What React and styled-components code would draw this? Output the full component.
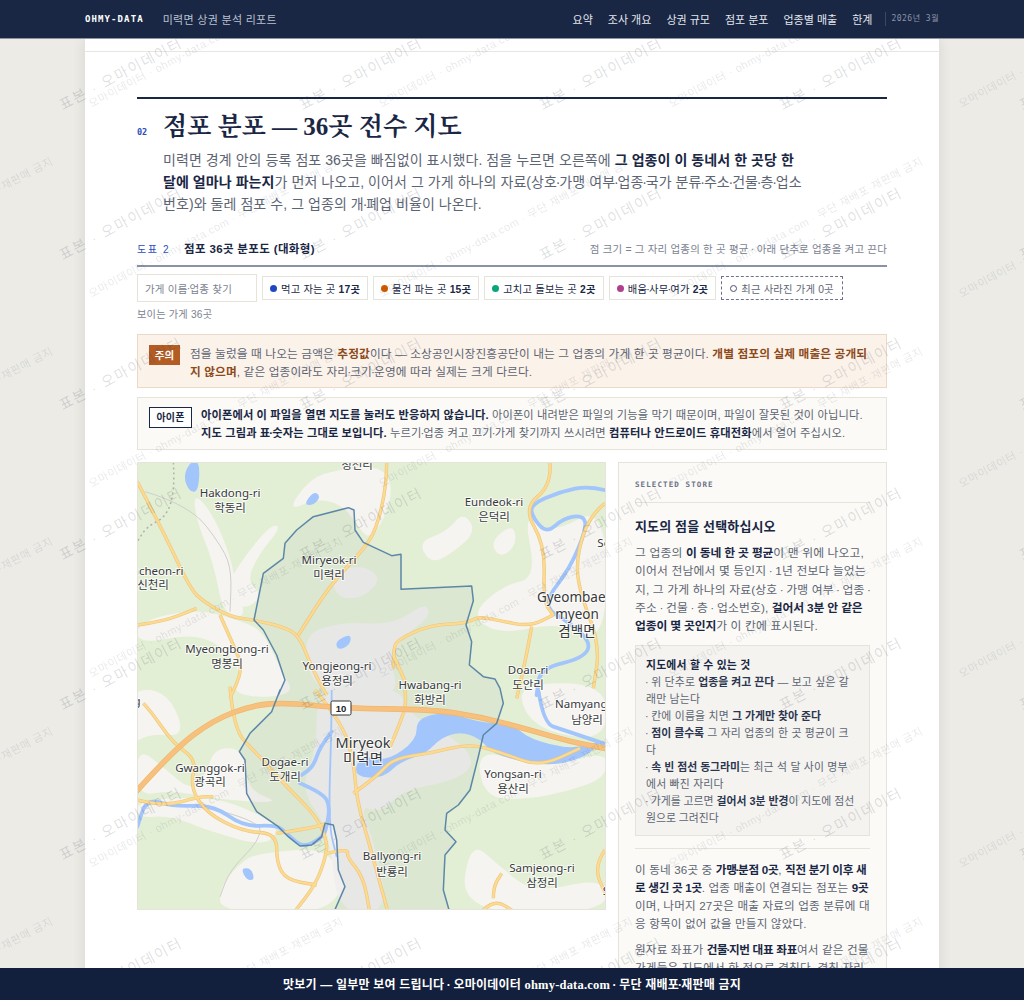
import React from 'react';
import styled, {createGlobalStyle} from 'styled-components';

const SANS = `'Liberation Sans', 'Noto Sans CJK KR', sans-serif`;
const MONO = `'DejaVu Sans Mono', 'Liberation Mono', 'Noto Sans CJK KR', monospace`;
const SERIF = `'Liberation Serif', 'Noto Serif CJK KR', 'Noto Sans CJK KR', serif`;
const NAVY = '#1a2744';
const LINE = '#e6e3da';
const GREY = '#5d6573';

const Reset = createGlobalStyle`
	* { box-sizing: border-box; }
	html, body { margin: 0; padding: 0; height: 100%; overflow: hidden; }
	body { font-family: ${SANS}; color: ${NAVY}; background: #ecebe6; }
`;

const Shell = styled.div`
	display: flex;
	flex-direction: column;
	height: 100vh;
	position: relative;
	overflow: hidden;
`;

const Nav = styled.header`
	flex: none;
	height: 39px;
	background: ${NAVY};
	border-bottom: 1px solid #8c93a3;
	display: flex;
	align-items: center;
	padding: 0 85px;
	position: relative;
	z-index: 3;
`;
const Logo = styled.span`
	font: bold 9px ${MONO};
	letter-spacing: 1.1px;
	color: #fff;
`;
const NavTitle = styled.span`
	margin-left: 19px;
	font-size: 11px;
	letter-spacing: 0.3px;
	color: #b9c0cf;
`;
const NavLinks = styled.nav`
	margin-left: auto;
	display: flex;
	gap: 15px;
	font-size: 11px;
	color: #e3e6ec;
`;
const NavDate = styled.span`
	margin-left: 13px;
	padding-left: 5px;
	border-left: 1px solid #3b4763;
	font: 8px/14px ${MONO};
	letter-spacing: 0.5px;
	color: #8b94a8;
`;

const Scroller = styled.main`
	flex: 1;
	min-height: 0;
	overflow: hidden;
`;
const Page = styled.div`
	width: 854px;
	margin: 0 auto;
	background: #fff;
	box-shadow: 0 0 12px rgba(60, 60, 50, 0.12);
`;
const PageStrip = styled.div`
	height: 13px;
	border-bottom: 1px solid #e8e6e0;
`;
const Body = styled.div`
	padding: 45px 52px 0;
`;
const SectionHead = styled.div`
	border-top: 2px solid ${NAVY};
	padding-top: 12px;
	display: flex;
	align-items: baseline;
	gap: 15px;
`;
const SectionNo = styled.span`
	width: 11px;
	font: bold 8.5px ${MONO};
	color: #2c4fc0;
`;
const SectionTitle = styled.h2`
	margin: 0;
	font: bold 25px/32px ${SERIF};
	color: ${NAVY};
`;
const Intro = styled.p`
	margin: 6px 0 0 26px;
	width: 645px;
	font-size: 14px;
	line-height: 22px;
	letter-spacing: 0.07px;
	color: ${GREY};
	b { color: ${NAVY}; font-weight: 700; }
`;
// the reference sets its middle dots much tighter than the font does
const Mid = styled.span`
	margin: 0 -0.085em;
`;
const D = () => <Mid>·</Mid>;

const FigureHead = styled.div`
	margin-top: 22px;
	display: flex;
	align-items: center;
	height: 22px;
	padding-bottom: 6px;
	border-bottom: 2px solid #8a92a5;
	box-sizing: content-box;
`;
const FigureNo = styled.span`
	width: 47px;
	font-size: 10px;
	letter-spacing: 1.6px;
	color: #2c4fc0;
`;
const FigureName = styled.span`
	font-size: 11.5px;
	font-weight: 700;
	letter-spacing: 0.35px;
`;
const FigureNote = styled.span`
	margin-left: auto;
	font-size: 10.5px;
	letter-spacing: 0.17px;
	color: #7b8290;
`;

const Controls = styled.div`
	margin-top: 7px;
	display: flex;
	align-items: center;
	gap: 5px;
`;
const Search = styled.div`
	width: 120px;
	height: 28px;
	padding: 0 7px;
	display: flex;
	align-items: center;
	border: 1px solid ${LINE};
	font-size: 10.5px;
	letter-spacing: 0.2px;
	color: #7b8290;
`;
const Chip = styled.div`
	height: 24px;
	padding: 0 ${({$dashed}) => ($dashed ? 8 : 7)}px;
	display: flex;
	align-items: center;
	gap: 4px;
	background: #fff;
	border: 1px ${({$dashed}) => ($dashed ? 'dashed #6b7488' : `solid ${LINE}`)};
	font-size: 10.3px;
	letter-spacing: 0.2px;
	color: ${({$dashed}) => ($dashed ? '#5d6573' : NAVY)};
	b { font-weight: 700; }
`;
const Dot = styled.i`
	width: 7px;
	height: 7px;
	border-radius: 50%;
	background: ${({$color}) => $color};
`;
const Ring = styled.i`
	width: 7px;
	height: 7px;
	border-radius: 50%;
	border: 1.5px solid #4a5468;
`;
const Visible = styled.div`
	margin-top: 5px;
	font-size: 10.2px;
	line-height: 15px;
	letter-spacing: 0.2px;
	color: #7b8290;
`;

const Notice = styled.div`
	margin-top: ${({$mt}) => $mt}px;
	padding: ${({$pt}) => $pt}px 16px 7px 11px;
	display: flex;
	align-items: flex-start;
	gap: ${({$gap}) => $gap}px;
	background: ${({$warm}) => ($warm ? '#fbf2ea' : '#fbfaf6')};
	border: 1px solid ${({$warm}) => ($warm ? '#ecd9c5' : LINE)};
	font-size: ${({$size}) => $size}px;
	line-height: 17.6px;
	letter-spacing: 0.12px;
	color: ${GREY};
	b { font-weight: 700; color: ${({$warm}) => ($warm ? '#8d4a1a' : NAVY)}; }
`;
const WarnTag = styled.span`
	flex: none;
	width: 31px;
	height: 20px;
	background: #b35c24;
	color: #fff;
	font-size: 10.5px;
	font-weight: 700;
	line-height: 20px;
	text-align: center;
`;
const PhoneTag = styled.span`
	flex: none;
	width: 43px;
	height: 21px;
	background: #fff;
	border: 1px solid ${NAVY};
	color: ${NAVY};
	font-size: 10px;
	font-weight: 700;
	line-height: 19px;
	text-align: center;
`;

const Split = styled.div`
	margin-top: 12px;
	display: grid;
	grid-template-columns: 469px 269px;
	gap: 12px;
	align-items: start;
`;
const MapFrame = styled.div`
	height: 448px;
	border: 1px solid ${LINE};
	overflow: hidden;
	svg { display: block; width: 100%; height: 100%; }
`;
const Side = styled.aside`
	padding: 16px 16px 20px;
	background: #fbfaf7;
	border: 1px solid ${LINE};
`;
const SideKicker = styled.div`
	padding-bottom: 12px;
	border-bottom: 1px solid ${LINE};
	font: bold 7.5px/11px ${MONO};
	letter-spacing: 1.1px;
	color: #6b7488;
`;
const SideTitle = styled.h3`
	margin: 15px 0 0;
	font-size: 13px;
	line-height: 18px;
	font-weight: 700;
	letter-spacing: 0.15px;
`;
const SideText = styled.p`
	margin: ${({$mt}) => $mt}px -1.5px 0 0;
	font-size: ${({$size}) => $size || 11.8}px;
	line-height: 18.1px;
	letter-spacing: 0.15px;
	color: ${GREY};
	b { font-weight: 700; letter-spacing: ${({$size}) => ($size ? -0.3 : -0.15)}px; color: ${NAVY}; }
`;
const Tips = styled.div`
	margin-top: 10px;
	padding: 11px 13px 8px 10px;
	background: #f4f3ef;
	border: 1px solid ${LINE};
	font-size: 10.85px;
	line-height: 17px;
	letter-spacing: 0.2px;
	color: ${GREY};
	b { font-weight: 700; letter-spacing: 0; color: #2c3650; }
`;
const TipsHead = styled.div`
	font-weight: 700;
	color: ${NAVY};
`;
const TipLine = styled.div`
	letter-spacing: ${({$tight}) => ($tight ? -0.02 : 0.2)}px;
`;
const SideRule = styled.div`
	margin-top: 12px;
	border-top: 1px solid ${LINE};
`;

const Footer = styled.footer`
	flex: none;
	height: 32px;
	background: #13203d;
	display: flex;
	align-items: center;
	justify-content: center;
	font-size: 12px;
	font-weight: 700;
	letter-spacing: 0.2px;
	color: #fff;
	position: relative;
	z-index: 3;
`;
const FooterLink = styled.span`
	font-family: ${SERIF};
	font-size: 12.5px;
`;

/* watermark repeats over everything but the two bars */
const MarkLayer = styled.div`
	position: absolute;
	left: ${({$x}) => $x}px;
	top: ${({$y}) => $y}px;
	display: grid;
	grid-template-columns: repeat(6, ${({$w}) => $w}px);
	grid-auto-rows: ${({$h}) => $h}px;
	pointer-events: none;
	z-index: 2;
`;
const Mark = styled.span`
	display: block;
	width: 0;
	height: 0;
	white-space: nowrap;
	transform-origin: 0 0;
	transform: rotate(-28deg);
	font-size: ${({$size}) => $size}px;
	line-height: 1;
	letter-spacing: ${({$space}) => $space}px;
	color: rgba(40, 50, 70, ${({$alpha}) => $alpha});
`;
const MarkRepeat = ({x, y, w, h, rows, size, space, alpha, text}) => (
	<MarkLayer $x={x} $y={y} $w={w} $h={h}>
		{Array.from({length: rows * 6}, (_, i) => (
			<Mark key={i} $size={size} $space={space} $alpha={alpha}>
				{text}
			</Mark>
		))}
	</MarkLayer>
);

/* ---- map drawing, coordinates taken from the page so 137,462 is the corner ---- */
const z5 = (pts) => pts.map(([x, y]) => [130 + x / 3, 455 + y / 3]);
const z6 = (pts) => pts.map(([x, y]) => [130 + x / 3, 690 + y / 3]);

const smooth = (pts, close) => {
	if (close) {
		const m = (a, b) => [(a[0] + b[0]) / 2, (a[1] + b[1]) / 2];
		let d = `M${m(pts[pts.length - 1], pts[0]).join(' ')}`;
		pts.forEach((p, i) => {
			d += `Q${p.join(' ')} ${m(p, pts[(i + 1) % pts.length]).join(' ')}`;
		});
		return d + 'Z';
	}
	let d = `M${pts[0].join(' ')}`;
	for (let i = 1; i < pts.length - 1; i++) {
		const mx = (pts[i][0] + pts[i + 1][0]) / 2;
		const my = (pts[i][1] + pts[i + 1][1]) / 2;
		d += `Q${pts[i].join(' ')} ${mx} ${my}`;
	}
	const last = pts[pts.length - 1];
	return d + `L${last.join(' ')}`;
};
const straight = (pts) => 'M' + pts.map((p) => p.join(' ')).join('L') + 'Z';

const LIGHT = [
	z5([[470,170],[540,70],[620,45],[745,30],[790,90],[765,190],[720,250],[690,225],[640,150],[560,130]]),
	z5([[325,330],[420,210],[455,215],[385,300],[350,380],[400,420],[340,470],[290,400]]),
	z5([[190,110],[250,180],[300,300],[320,400],[350,490],[280,480],[250,320],[200,200]]),
	z5([[865,260],[950,230],[1000,170],[1040,230],[960,300],[900,325]]),
	z5([[1080,260],[1150,205],[1160,270],[1110,310]]),
	z5([[1120,390],[1220,370],[1180,170],[1260,240],[1430,145],[1430,570],[1290,500],[1110,540],[1020,480]]),
	z5([[22,500],[200,460],[340,500],[400,530],[450,640],[500,725],[300,725],[340,640],[220,530],[22,570]]),
	z6([[20,170],[110,240],[180,300],[225,260],[255,170],[345,180],[350,300],[460,340],[280,330],[120,300],[22,320]]),
	z6([[22,330],[250,320],[370,365],[450,410],[410,470],[240,425],[120,375],[22,385]]),
	z6([[380,490],[620,470],[640,670],[270,670],[270,590],[330,520]]),
	z6([[1020,450],[1110,530],[1210,610],[1430,560],[1430,670],[990,670]]),
	z6([[1170,-20],[1430,-20],[1430,150],[1260,130],[1180,70]]),
	z6([[1040,170],[1240,240],[1430,180],[1430,260],[1330,300],[1180,330],[1060,320]]),
	z6([[-10,0],[110,0],[170,140],[60,130],[-10,170]]),
];
const GREYED = [
	z5([[600,350],[700,330],[755,370],[700,430],[620,430]]),
	z5([[510,540],[640,500],[790,510],[890,440],[900,490],[820,540],[780,620],[810,730],[560,730]]),
	z6([[560,-10],[810,-10],[830,70],[1000,160],[1035,230],[960,275],[820,300],[750,370],[690,345],[730,450],[780,670],[620,670],[600,420],[510,300],[560,180]]),
];
const ROADS = [
	z5([[22,80],[100,230],[180,400],[220,440],[300,485],[370,495],[460,515],[510,545],[545,640],[590,720]]),
	z6([[555,0],[630,90],[670,200],[680,330],[720,470],[775,670]]),
	z5([[770,22],[770,90],[740,220],[700,285],[600,390],[505,540]]),
	z5([[790,640],[790,590],[800,555],[900,510],[1010,505],[1045,485],[1100,495],[1200,515],[1270,480]]),
	z5([[1205,515],[1190,600],[1160,730]]),
	z5([[790,600],[830,690]]),
	z6([[825,0],[830,40],[810,100],[780,170]]),
	z5([[1260,22],[1265,90],[1180,160],[1245,270],[1240,440],[1270,480]]),
	z5([[1425,145],[1380,180],[1340,300],[1345,400],[1410,570],[1390,700]]),
	z5([[22,510],[100,500],[200,460]]),
	z5([[270,480],[310,570],[340,640],[300,730]]),
	z6([[300,-10],[310,120],[380,190],[470,290],[560,380],[590,450],[590,490],[560,580],[490,670]]),
	z6([[40,40],[60,60],[130,160],[200,210],[180,290],[230,370],[340,425],[440,430],[440,520],[470,570],[560,585]]),
	z6([[22,330],[100,350],[210,320],[250,320]]),
	z6([[670,310],[740,260],[790,205],[900,190],[1020,160],[1120,190],[1230,230],[1350,175]]),
	z6([[590,490],[655,475],[650,500],[700,560],[720,670]]),
	z6([[1050,670],[1090,625],[1160,670]]),
	z6([[1090,625],[1090,590],[1115,550]]),
	z6([[1425,480],[1390,530],[1430,620]]),
	z6([[440,430],[540,415],[590,400]]),
];
const HIGHWAY = z6([[5,320],[130,180],[250,90],[370,45],[470,38],[640,55],[900,58],[1050,80],[1200,120],[1320,155],[1440,178]]);
const RIVERS = [
	z6([[605,125],[570,170],[550,230],[515,255]]),
	z6([[510,280],[580,310],[600,350],[590,410],[580,440],[520,475],[470,430],[440,405],[340,410],[250,345],[130,350],[50,325],[22,410]]),
	z5([[1435,108],[1380,92],[1290,110],[1200,150],[1210,190],[1250,235],[1300,190],[1360,180],[1370,220],[1320,340],[1250,430],[1260,470],[1300,490],[1385,560],[1360,610],[1230,640],[1220,720]]),
	z6([[1225,0],[1240,100],[1300,120],[1420,160]]),
];
const LAKE = z6([[770,215],[860,150],[860,85],[950,65],[1040,95],[1150,105],[1190,140],[1260,165],[1340,175],[1425,150],[1360,205],[1250,230],[1090,195],[1050,145],[990,125],[930,145],[890,190],[810,215],[760,265],[670,260],[690,195]]);
const PONDS = [
	z5([[180,20],[210,20],[205,110],[178,110],[160,65]]),
	z5([[520,150],[552,108],[572,125],[552,150]]),
	z5([[615,560],[662,535],[662,568],[625,587]]),
	z6([[332,535],[364,535],[374,570],[350,570]]),
];
const BORDER = [
	...z5([[655,158],[672,165],[675,225],[700,262],[785,302],[813,298],[813,403],[1025,393],[1030,437],[1008,510],[1025,560],[1018,630],[1060,665],[1095,672],[1110,700]]),
	...z6([[1120,40],[1100,100],[1060,135],[1045,200],[1020,300],[985,345],[950,370],[945,420],[978,455],[945,495],[940,600],[960,670],[610,670],[645,590],[625,540],[620,450],[610,405],[585,400],[575,440],[545,465],[510,468],[475,440],[445,410],[380,365],[350,310],[345,210],[328,185],[360,130],[425,65],[450,0]]),
	...z5([[445,720],[465,675],[440,600],[400,525],[372,495],[400,355],[460,310],[465,265],[500,225],[550,185]]),
];
const LABELS = [
	['청천리', 357, 464], ['Hakdong-ri', 230, 492], ['학동리', 230, 507], ['Eundeok-ri', 494, 501], ['은덕리', 494, 516],
	['Miryeok-ri', 329, 559], ['미력리', 329, 574], ['Sincheon-ri', 153, 570], ['신천리', 153, 584],
	['Myeongbong-ri', 227, 648], ['명봉리', 227, 663], ['Yongjeong-ri', 337, 665], ['용정리', 337, 680],
	['Hwabang-ri', 430, 684], ['화방리', 430, 699], ['Doan-ri', 528, 669], ['도안리', 528, 684],
	['Namyang-ri', 587, 703], ['남양리', 587, 719], ['Dogae-ri', 285, 761], ['도개리', 285, 776],
	['Gwanggok-ri', 210, 767], ['광곡리', 210, 781], ['Yongsan-ri', 513, 773], ['용산리', 513, 788],
	['Ballyong-ri', 392, 855], ['반룡리', 392, 871], ['Samjeong-ri', 542, 867], ['삼정리', 542, 882],
	['ri', 133, 468], ['리', 132, 487], ['Wang', 125, 700], ['리', 132, 716], ['So', 604, 542], ['S', 606, 890],
];
const BIG_LABELS = [
	['Gyeombaek-', 577, 597, 13.5], ['myeon', 577, 614, 13.5], ['겸백면', 577, 631, 13.5],
	['Miryeok', 363, 742, 14.5], ['미력면', 363, 758, 14.5],
];

const MapLabel = styled.text`
	font-family: 'Noto Sans', 'Noto Sans CJK KR', sans-serif;
	font-size: ${({$size}) => $size}px;
	fill: #37393c;
	stroke: rgba(255, 255, 255, 0.75);
	stroke-width: 2px;
	paint-order: stroke;
	text-anchor: middle;
	dominant-baseline: central;
`;
const ShieldText = styled.text`
	font: bold 9.5px ${SANS};
	fill: #222;
	text-anchor: middle;
	dominant-baseline: central;
`;

const MapDrawing = () => (
	<svg viewBox="138 463 467 446" preserveAspectRatio="none">
		<rect x="130" y="455" width="490" height="470" fill="#e3efd5" />
		{LIGHT.map((p, i) => <path key={i} d={smooth(p, true)} fill="#f6f4f0" />)}
		{GREYED.map((p, i) => <path key={i} d={smooth(p, true)} fill="#f0efed" />)}
		<path d={straight(BORDER)} fill="rgba(80,100,110,0.05)" />
		<path d={smooth(z5([[45,110],[180,150],[280,280],[305,350],[300,470]]), false)} fill="none" stroke="#cfcfc9" strokeWidth="1" />
		<path d={smooth(z6([[220,350],[390,390],[390,450],[300,540],[270,620]]), false)} fill="none" stroke="#cfcfc9" strokeWidth="1" />
		<path d={smooth(z5([[130,22],[135,100],[110,185],[50,215],[22,260]]), false)} fill="none" stroke="#a9b3ac" strokeWidth="1.5" strokeDasharray="2 3" />
		{PONDS.map((p, i) => <path key={i} d={smooth(p, true)} fill="#a2c5fb" />)}
		<path d={smooth(z6([[605,0],[605,100],[595,400],[620,500]]), false)} fill="none" stroke="#a2c5fb" strokeWidth="1.8" />
		{RIVERS.map((p, i) => <path key={i} d={smooth(p, false)} fill="none" stroke="#a2c5fb" strokeWidth="3.8" strokeLinecap="round" />)}
		<path d={smooth(LAKE, true)} fill="#a2c5fb" />
		{ROADS.map((p, i) => <path key={i} d={smooth(p, false)} fill="none" stroke="#f0c47e" strokeWidth="3.4" />)}
		{ROADS.map((p, i) => <path key={i} d={smooth(p, false)} fill="none" stroke="#fbdb90" strokeWidth="2.2" />)}
		<path d={smooth(HIGHWAY, false)} fill="none" stroke="#efb66e" strokeWidth="5.6" />
		<path d={smooth(HIGHWAY, false)} fill="none" stroke="#f7c07c" strokeWidth="4.2" />
		<path d={straight(BORDER)} fill="none" stroke="#5d87a8" strokeWidth="1.5" strokeLinejoin="round" />
		<rect x="331" y="701" width="20" height="14" rx="1.5" fill="#fff" stroke="#333" strokeWidth="1" />
		<ShieldText x="341" y="708">10</ShieldText>
		{LABELS.map(([t, x, y]) => <MapLabel key={t + x + y} x={x} y={y} $size={11.5}>{t}</MapLabel>)}
		{BIG_LABELS.map(([t, x, y, s]) => <MapLabel key={t} x={x} y={y} $size={s}>{t}</MapLabel>)}
	</svg>
);

const NAV_LINKS = ['요약', '조사 개요', '상권 규모', '점포 분포', '업종별 매출', '한계'];
const CHIPS = [
	['#1f48c0', <>먹고 자는 곳</>, '17곳'],
	['#d05a00', <>물건 파는 곳</>, '15곳'],
	['#0ba678', <>고치고 돌보는 곳</>, '2곳'],
	['#b0408e', <>배움<D />사무<D />여가</>, '2곳'],
];

export default function App() {
	return (
		<Shell>
			<Reset />
			<Nav>
				<Logo>OHMY-DATA</Logo>
				<NavTitle>미력면 상권 분석 리포트</NavTitle>
				<NavLinks>
					{NAV_LINKS.map((l) => <span key={l}>{l}</span>)}
				</NavLinks>
				<NavDate>2026년 3월</NavDate>
			</Nav>
			<Scroller>
				<Page>
					<PageStrip />
					<Body>
						<SectionHead>
							<SectionNo>02</SectionNo>
							<SectionTitle>점포 분포 — 36곳 전수 지도</SectionTitle>
						</SectionHead>
						<Intro>
							미력면 경계 안의 등록 점포 36곳을 빠짐없이 표시했다. 점을 누르면 오른쪽에 <b>그 업종이 이 동네서 한 곳당 한 달에 얼마나 파는지</b>가 먼저 나오고, 이어서 그 가게 하나의 자료(상호<D />가맹 여부<D />업종<D />국가 분류<D />주소<D />건물<D />층<D />업소번호)와 둘레 점포 수, 그 업종의 개<D />폐업 비율이 나온다.
						</Intro>
						<FigureHead>
							<FigureNo>도표 2</FigureNo>
							<FigureName>점포 36곳 분포도 (대화형)</FigureName>
							<FigureNote>점 크기 = 그 자리 업종의 한 곳 평균 <D /> 아래 단추로 업종을 켜고 끈다</FigureNote>
						</FigureHead>
						<Controls>
							<Search>가게 이름<D />업종 찾기</Search>
							{CHIPS.map(([c, label, n]) => (
								<Chip key={c}>
									<Dot $color={c} />
									<span>{label} <b>{n}</b></span>
								</Chip>
							))}
							<Chip $dashed>
								<Ring />
								<span>최근 사라진 가게 0곳</span>
							</Chip>
						</Controls>
						<Visible>보이는 가게 36곳</Visible>
						<Notice $warm $mt={12} $pt={10} $gap={10} $size={11.7}>
							<WarnTag>주의</WarnTag>
							<div>
								점을 눌렀을 때 나오는 금액은 <b>추정값</b>이다 — 소상공인시장진흥공단이 내는 그 업종의 가게 한 곳 평균이다. <b>개별 점포의 실제 매출은 공개되지 않으며</b>, 같은 업종이라도 자리<D />크기<D />운영에 따라 실제는 크게 다르다.
							</div>
						</Notice>
						<Notice $mt={9} $pt={9} $gap={9} $size={11.25}>
							<PhoneTag>아이폰</PhoneTag>
							<div>
								<b>아이폰에서 이 파일을 열면 지도를 눌러도 반응하지 않습니다.</b> 아이폰이 내려받은 파일의 기능을 막기 때문이며, 파일이 잘못된 것이 아닙니다. <b>지도 그림과 표<D />숫자는 그대로 보입니다.</b> 누르기<D />업종 켜고 끄기<D />가게 찾기까지 쓰시려면 <b>컴퓨터나 안드로이드 휴대전화</b>에서 열어 주십시오.
							</div>
						</Notice>
						<Split>
							<MapFrame>
								<MapDrawing />
							</MapFrame>
							<Side>
								<SideKicker>SELECTED STORE</SideKicker>
								<SideTitle>지도의 점을 선택하십시오</SideTitle>
								<SideText $mt={8}>
									그 업종의 <b>이 동네 한 곳 평균</b>이 맨 위에 나오고, 이어서 전남에서 몇 등인지 <D /> 1년 전보다 늘었는지, 그 가게 하나의 자료(상호 <D /> 가맹 여부 <D /> 업종 <D /> 주소 <D /> 건물 <D /> 층 <D /> 업소번호), <b>걸어서 3분 안 같은 업종이 몇 곳인지</b>가 이 칸에 표시된다.
								</SideText>
								<Tips>
									<TipsHead>지도에서 할 수 있는 것</TipsHead>
									<TipLine><D /> 위 단추로 <b>업종을 켜고 끈다</b> — 보고 싶은 갈래만 남는다</TipLine>
									<TipLine><D /> 칸에 이름을 치면 <b>그 가게만 찾아 준다</b></TipLine>
									<TipLine><D /> <b>점이 클수록</b> 그 자리 업종의 한 곳 평균이 크다</TipLine>
									<TipLine><D /> <b>속 빈 점선 동그라미</b>는 최근 석 달 사이 명부에서 빠진 자리다</TipLine>
									<TipLine $tight><D /> 가게를 고르면 <b>걸어서 3분 반경</b>이 지도에 점선 원으로 그려진다</TipLine>
								</Tips>
								<SideRule />
								<SideText $mt={12} $size={11.6}>
									이 동네 36곳 중 <b>가맹<D />분점 0곳</b>, <b>직전 분기 이후 새로 생긴 곳 1곳</b>. 업종 매출이 연결되는 점포는 <b>9곳</b>이며, 나머지 27곳은 매출 자료의 업종 분류에 대응 항목이 없어 값을 만들지 않았다.
								</SideText>
								<SideText $mt={8} $size={11.6}>
									원자료 좌표가 <b>건물<D />지번 대표 좌표</b>여서 같은 건물 가게들은 지도에서 한 점으로 겹친다. 겹친 자리는 점을 눌러 차례로 확인한다.
								</SideText>
							</Side>
						</Split>
					</Body>
				</Page>
			</Scroller>
			<Footer>
				<span>맛보기 — 일부만 보여 드립니다 <D /> 오마이데이터 <FooterLink>ohmy-data.com</FooterLink> <D /> 무단 재배포<D />재판매 금지</span>
			</Footer>
			<MarkRepeat x={-183} y={-50} w={240} h={150} rows={8} size={14.5} space={1.6} alpha={0.16} text="표본 · 오마이데이터" />
			<MarkRepeat x={-203} y={-90} w={290} h={190} rows={7} size={11} space={0.5} alpha={0.12} text="오마이데이터 · ohmy-data.com · 무단 재배포·재판매 금지" />
		</Shell>
	);
}
